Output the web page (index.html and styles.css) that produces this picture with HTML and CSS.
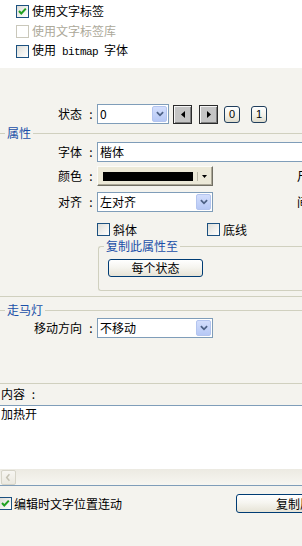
FILE: index.html
```html
<!DOCTYPE html>
<html>
<head>
<meta charset="utf-8">
<link rel="stylesheet" href="styles.css">
</head>
<body>
<div class="top">
  <div class="chk"><span class="cb"><svg viewBox="0 0 11 11"><polyline points="2,5 4.3,7.5 8.8,2.6" fill="none" stroke="#21a121" stroke-width="2"/></svg></span><span>使用文字标签</span></div>
  <div class="chk off"><span class="cb"></span><span>使用文字标签库</span></div>
  <div class="chk"><span class="cb"></span><span>使用<span class="mono"> bitmap </span>字体</span></div>
</div>

<div class="row state">
  <span class="lbl">状态<span class="colon">:</span></span>
  <div class="select w72"><span class="val">0</span><span class="dd"><svg viewBox="0 0 9 6"><polyline points="1,1 4.5,4.5 8,1" fill="none" stroke="#4d6185" stroke-width="2"/></svg></span></div>
  <span class="nav prev"><svg viewBox="0 0 4 7"><polygon points="4,0 0,3.5 4,7" fill="#000"/></svg></span>
  <span class="nav next"><svg viewBox="0 0 4 7"><polygon points="0,0 4,3.5 0,7" fill="#000"/></svg></span>
  <button class="xbtn x0">0</button>
  <button class="xbtn x1">1</button>
</div>

<section class="group g-attr">
  <h3 class="legend">属性</h3>
  <div class="row r-font">
    <span class="lbl">字体<span class="colon">:</span></span>
    <div class="input">楷体</div>
  </div>
  <div class="row r-color">
    <span class="lbl">颜色<span class="colon">:</span></span>
    <div class="colorbox"><span class="swatch"></span><span class="sep"></span><svg class="tri" viewBox="0 0 5 3"><polygon points="0,0 5,0 2.5,3" fill="#000"/></svg></div>
    <span class="side">尺寸</span>
  </div>
  <div class="row r-align">
    <span class="lbl">对齐<span class="colon">:</span></span>
    <div class="select w116"><span class="val">左对齐</span><span class="dd"><svg viewBox="0 0 9 6"><polyline points="1,1 4.5,4.5 8,1" fill="none" stroke="#4d6185" stroke-width="2"/></svg></span></div>
    <span class="side">间距</span>
  </div>
  <div class="row r-style">
    <div class="opt italic"><span class="cb"></span><span>斜体</span></div>
    <div class="opt"><span class="cb"></span><span>底线</span></div>
  </div>
  <div class="inner">
    <h4 class="legend">复制此属性至</h4>
    <button class="xpbtn each">每个状态</button>
  </div>
</section>

<section class="group g-marq">
  <h3 class="legend">走马灯</h3>
  <div class="row">
    <span class="lbl">移动方向<span class="colon">:</span></span>
    <div class="select w116"><span class="val">不移动</span><span class="dd"><svg viewBox="0 0 9 6"><polyline points="1,1 4.5,4.5 8,1" fill="none" stroke="#4d6185" stroke-width="2"/></svg></span></div>
  </div>
</section>

<div class="content-lbl">内容 <span class="colon2">:</span></div>
<div class="textarea">
  <div class="text">加热开</div>
  <div class="hscroll"><span class="sbtn"><svg viewBox="0 0 14 14"><polyline points="8,3.5 5,7 8,10.5" fill="none" stroke="#c4c1b3" stroke-width="1.6"/></svg></span></div>
</div>

<div class="row bottom">
  <div class="opt link"><span class="cb"><svg viewBox="0 0 11 11"><polyline points="2,5 4.3,7.5 8.8,2.6" fill="none" stroke="#21a121" stroke-width="2"/></svg></span><span>编辑时文字位置连动</span></div>
  <button class="xpbtn copy">复制属性</button>
</div>
</body>
</html>
```

FILE: styles.css
```css
* { box-sizing: border-box; margin: 0; padding: 0; }
html, body { width: 302px; height: 546px; }
body {
  overflow: hidden;
  background: #f4f3ee;
  font-family: "Noto Sans CJK SC", "Noto Sans", sans-serif;
  font-size: 12px;
  line-height: 16px;
  color: #000;
}

.top { height: 68px; background: #fff; padding-top: 1px; }
.chk { display: flex; align-items: center; gap: 3px; height: 20px; padding-left: 16px; white-space: nowrap; }
.chk.off { color: #aca899; }
.chk.off .cb { border-color: #cac8bb; background: #fff; }
.mono { font-family: "Liberation Mono", monospace; font-size: 11px; letter-spacing: -0.6px; white-space: pre; }

.cb {
  width: 13px; height: 13px; flex: none;
  border: 1px solid #1c5180;
  background: linear-gradient(135deg, #dcdcd7 0%, #f1f1ee 55%, #fff 100%);
  display: flex; align-items: center; justify-content: center;
}
.cb svg { width: 11px; height: 11px; display: block; }

.row { display: flex; align-items: center; height: 20px; white-space: nowrap; }
.lbl { width: 97px; flex: none; display: flex; justify-content: flex-end; padding-right: 3px; }
.colon { width: 6px; margin-left: 6px; text-align: center; }

.state { margin-top: 36px; }
.select {
  height: 20px; flex: none;
  border: 1px solid #7f9db9; background: #fff;
  display: flex; align-items: center; padding: 0 1px 0 2px;
}
.select .val { flex: 1; }
.w72 { width: 72px; }
.w116 { width: 116px; }
.dd {
  width: 15px; height: 16px;
  border: 1px solid #b4c5ef; border-radius: 2px;
  background: linear-gradient(#d3defc, #b6c8f5);
  display: flex; align-items: center; justify-content: center;
}
.dd svg { width: 8px; height: 6px; display: block; }

.nav {
  width: 19px; height: 19px; flex: none;
  border: 1px solid #2b2b2b;
  background: #c4c4c4;
  box-shadow: inset 1px 1px #f4f4f4, inset -1px -1px #7e7e7e;
  display: flex; align-items: center; justify-content: center;
}
.nav svg { width: 4px; height: 7px; display: block; }
.prev { margin-left: 4px; }
.next { margin-left: 7px; }
.xbtn {
  width: 16px; height: 17px; flex: none;
  border: 1px solid #1f3d5c; border-radius: 3px;
  background: linear-gradient(#fff, #f1efe6 60%, #dedbcc);
  font: inherit; font-family: "Liberation Sans", sans-serif; font-size: 11px;
  display: flex; align-items: center; justify-content: center; color: #000;
}
.x0 { margin-left: 6px; }
.x1 { margin-left: 11px; }

.group { position: relative; border-top: 1px solid #d0d0bf; border-bottom: 1px solid #d0d0bf; }
.legend {
  position: absolute; top: -9px; left: 5px;
  padding: 0 2px; background: #f4f3ee;
  color: #1a4fa8; font-size: 12px; font-weight: normal; line-height: 16px;
  white-space: nowrap;
}
.g-attr { margin-top: 9px; padding: 8px 0 5px; }
.g-marq { margin-top: 13px; padding: 7px 0 45px; }

.input {
  width: 240px; height: 20px; flex: none;
  border: 1px solid #7f9db9; background: #fff;
  padding-left: 2px; display: flex; align-items: center;
}
.r-color { margin-top: 4px; }
.r-align { margin-top: 6px; }
.colorbox {
  width: 116px; height: 20px; flex: none;
  border: 1px solid; border-color: #fbfbf8 #716f64 #716f64 #fbfbf8;
  box-shadow: inset -1px -1px #aca899;
  background: #ece9d8;
  display: flex; align-items: center; padding-left: 5px;
}
.swatch { width: 90px; height: 9px; background: #000; flex: none; }
.sep { width: 1px; height: 9px; background: #b8b5a6; margin-left: 4px; flex: none; }
.tri { width: 5px; height: 3px; margin-left: 4px; display: block; }
.side { margin-left: 84px; flex: none; }

.r-style { height: 13px; margin-top: 11px; padding-left: 97px; }
.opt { display: flex; align-items: center; gap: 3px; white-space: nowrap; }
.opt.italic { width: 110px; }

.inner {
  position: relative;
  margin: 10px 0 0 98px;
  border: 1px solid #d0d0bf; border-right: none;
  border-radius: 3px 0 0 3px;
  padding: 12px 0 13px 9px;
}
.inner .legend { left: 5px; }
.xpbtn {
  height: 18px;
  border: 1px solid #003c74; border-radius: 3px;
  background: linear-gradient(#ffffff 0%, #f6f5f0 45%, #e6e3d6 100%);
  font: inherit; color: #000;
  display: flex; align-items: center; justify-content: center;
}
.each { width: 95px; }

.content-lbl { height: 21px; padding: 2px 0 0 1px; white-space: nowrap; }
.colon2 { margin-left: 4px; }
.textarea {
  margin-left: -1px; width: 320px;
  border-top: 1px solid #7f9db9; border-bottom: 1px solid #7f9db9; border-left: 1px solid #7f9db9;
  background: #fff;
}
.text { height: 63px; padding-left: 1px; }
.hscroll { height: 16px; background: linear-gradient(#eceae2, #f7f6f1); padding: 1px 0 0 1px; }
.sbtn {
  display: flex; align-items: center; justify-content: center;
  width: 15px; height: 15px;
  border: 1px solid #d6d4c8; border-radius: 2px;
  background: linear-gradient(#f7f6f2, #ebe9e0);
}
.sbtn svg { width: 13px; height: 13px; display: block; }

.bottom { height: 19px; margin-top: 8px; }
.link { width: 237px; margin-left: -1px; flex: none; gap: 2px; }
.copy { width: 128px; flex: none; height: 19px; }
```
